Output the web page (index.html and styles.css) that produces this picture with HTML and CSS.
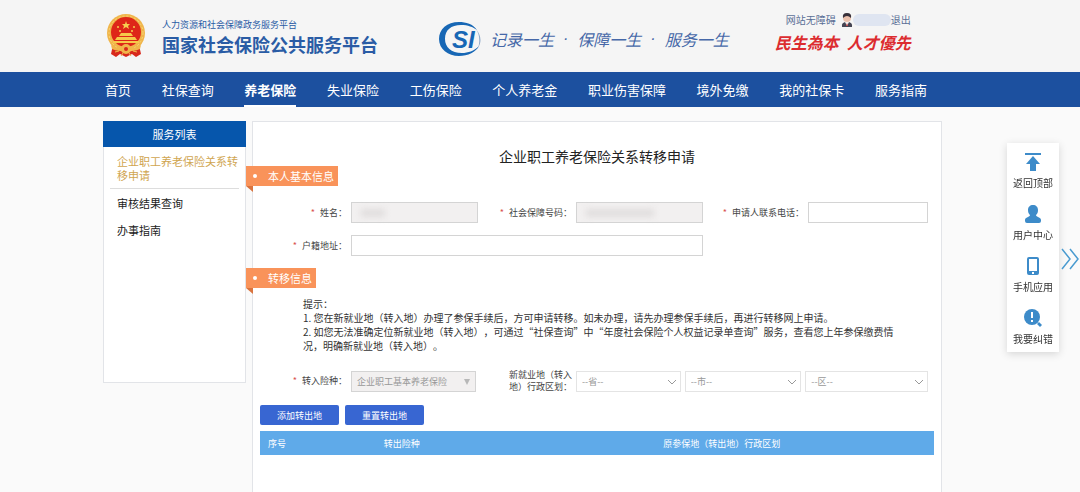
FILE: index.html
```html
<!DOCTYPE html>
<html lang="zh-CN">
<head>
  <meta charset="UTF-8">
  <meta name="viewport" content="width=device-width, initial-scale=1.0">
  <title>国家社会保险公共服务平台</title>
  <link rel="stylesheet" href="styles.css">
</head>
<body>

  <header class="header">
    <svg class="emblem" viewBox="0 0 40 44" aria-hidden="true">
      <path d="M7 31 L5 40 L10 43 L14 40 L20 43 L26 40 L30 43 L35 40 L33 31 Z" fill="#d8281c" />
      <circle cx="20" cy="19" r="19" fill="#f0b54a" />
      <circle cx="20" cy="19" r="17" fill="none" stroke="#f8d477" stroke-width="1" stroke-dasharray="2 2" />
      <circle cx="20" cy="18" r="15" fill="#de2618" />
      <path d="M20 7 l1 3 h3 l-2 2 1 3 -3 -2 -3 2 1 -3 -2 -2 h3 Z" fill="#f6cf4f" />
      <circle cx="12" cy="13" r="1" fill="#f6cf4f" />
      <circle cx="28" cy="13" r="1" fill="#f6cf4f" />
      <circle cx="14" cy="17" r="1" fill="#f6cf4f" />
      <circle cx="26" cy="17" r="1" fill="#f6cf4f" />
      <path d="M13 22 L15 19 H25 L27 22 Z M9 26 L11 23 H29 L31 26 Z M7 27 H33 V29 H7 Z" fill="#f6c94a" />
      <path d="M5 31 Q12 36 17 33 H23 Q28 36 35 31 L34 35 Q28 38 24 36 H16 Q12 38 6 35 Z" fill="#f0b54a" />
      <circle cx="20" cy="35" r="5" fill="#f0b54a" />
      <circle cx="20" cy="35" r="2" fill="#d8281c" />
      <path d="M9 38 L13 37 M31 38 L27 37 M15 42 L17 39 M25 42 L23 39" stroke="#f0b54a" stroke-width="1" />
    </svg>
    <div class="site-name">
      <p class="site-sub">人力资源和社会保障政务服务平台</p>
      <h1 class="site-title">国家社会保险公共服务平台</h1>
    </div>

    <div class="slogan">
      <svg class="si-logo" viewBox="0 0 42 34" role="img" aria-label="SI">
        <path d="M38 8 C34 2 27 0 20 0 C8 0 0 7 0 17 C0 27 9 34 20 34 C29 34 37 30 40 24 C35 29 29 31 23 31 C12 31 6 25 6 17 C6 8 12 3 22 3 C29 3 34 5 38 8 Z" fill="#1767b5" />
        <path d="M37 7 C42 13 43 20 39 26 C41 20 41 13 37 7 Z" fill="#8aa6c6" />
        <text x="13" y="26" class="si-text">SI</text>
      </svg>
      <span>记录一生</span><span>·</span><span>保障一生</span><span>·</span><span>服务一生</span>
    </div>

    <div class="account">
      <div class="account-links">
        <a href="#">网站无障碍</a>
        <svg class="avatar" viewBox="0 0 12 14" aria-hidden="true">
          <path d="M1 14 Q0 9 6 9 Q12 9 11 14 Z" fill="#454553" />
          <path d="M4 9 L6 13 L8 9 Z" fill="#f3f3f3" />
          <circle cx="6" cy="5" r="4" fill="#ecc1ad" />
          <path d="M2 5 Q1 0 6 0 Q11 0 10 5 Q8 3 6 3 Q4 3 2 5 Z" fill="#38313a" />
          <path d="M6 10 L7 13 H5 Z" fill="#c54949" />
        </svg>
        <span class="user-mask"></span>
        <a href="#">退出</a>
      </div>
      <p class="motto"><span>民生為本</span><span>人才優先</span></p>
    </div>
  </header>

  <nav class="nav">
    <a href="#">首页</a>
    <a href="#">社保查询</a>
    <a href="#" class="active">养老保险</a>
    <a href="#">失业保险</a>
    <a href="#">工伤保险</a>
    <a href="#">个人养老金</a>
    <a href="#">职业伤害保障</a>
    <a href="#">境外免缴</a>
    <a href="#">我的社保卡</a>
    <a href="#">服务指南</a>
  </nav>

  <div class="page">
    <aside class="sidebar">
      <h2 class="sidebar-title">服务列表</h2>
      <ul class="menu">
        <li class="current"><a href="#">企业职工养老保险关系转移申请</a></li>
        <li><a href="#">审核结果查询</a></li>
        <li><a href="#">办事指南</a></li>
      </ul>
    </aside>

    <main class="content">
      <h2 class="content-title">企业职工养老保险关系转移申请</h2>

      <!-- Personal info -->
      <h3 class="tag">本人基本信息</h3>
      <div class="form">
        <label for="name"><i>*</i>姓名：</label>
        <div class="masked"><input type="text" id="name" disabled><span class="smudge"></span></div>
        <label for="idNumber"><i>*</i>社会保障号码：</label>
        <div class="masked"><input type="text" id="idNumber" disabled><span class="smudge smudge-long"></span></div>
        <label for="phone"><i>*</i>申请人联系电话：</label>
        <input type="text" id="phone">
        <label for="address"><i>*</i>户籍地址：</label>
        <input type="text" id="address" class="wide">
      </div>

      <!-- Transfer info -->
      <h3 class="tag tag-transfer">转移信息</h3>
      <div class="hint">
        <p>提示：</p>
        <p>1. 您在新就业地（转入地）办理了参保手续后，方可申请转移。如未办理，请先办理参保手续后，再进行转移网上申请。</p>
        <p>2. 如您无法准确定位新就业地（转入地），可通过“社保查询”中“年度社会保险个人权益记录单查询”服务，查看您上年参保缴费情况，明确新就业地（转入地）。</p>
      </div>

      <div class="form form-transfer">
        <label for="insurance"><i>*</i>转入险种：</label>
        <div class="select-box insurance">
          <select id="insurance" disabled><option>企业职工基本养老保险</option></select>
          <svg viewBox="0 0 8 8" aria-hidden="true"><path d="M1 1 H7 L4 7 Z" fill="#b8b8b8" /></svg>
        </div>
        <label for="province" class="two-line">新就业地（转入地）行政区划：</label>
        <div class="region">
          <div class="select-box">
            <select id="province"><option>--省--</option></select>
            <svg viewBox="0 0 8 8" aria-hidden="true"><path d="M0 2 L4 6 L8 2" fill="none" stroke="#999" /></svg>
          </div>
          <div class="select-box">
            <select id="city" aria-label="市"><option>--市--</option></select>
            <svg viewBox="0 0 8 8" aria-hidden="true"><path d="M0 2 L4 6 L8 2" fill="none" stroke="#999" /></svg>
          </div>
          <div class="select-box">
            <select id="district" aria-label="区"><option>--区--</option></select>
            <svg viewBox="0 0 8 8" aria-hidden="true"><path d="M0 2 L4 6 L8 2" fill="none" stroke="#999" /></svg>
          </div>
        </div>
      </div>

      <div class="actions">
        <button type="button">添加转出地</button>
        <button type="button">重置转出地</button>
      </div>

      <table class="table">
        <thead>
          <tr>
            <th class="col-no">序号</th>
            <th class="col-type">转出险种</th>
            <th>原参保地（转出地）行政区划</th>
          </tr>
        </thead>
      </table>
    </main>
  </div>

  <!-- Floating toolbar -->
  <div class="toolbar">
    <a href="#">
      <svg viewBox="0 0 20 20" aria-hidden="true"><path d="M2 1 H18 V3 H2 Z M10 4 L17 12 H13 V19 H7 V12 H3 Z" /></svg>
      返回顶部
    </a>
    <a href="#">
      <svg viewBox="0 0 20 20" aria-hidden="true"><path d="M10 1 C13 1 15 3 15 6 C15 9 14 10 13 11 C13 13 18 13 18 16 V17 Q18 19 16 19 H4 Q2 19 2 17 V16 C2 13 7 13 7 11 C6 10 5 9 5 6 C5 3 7 1 10 1 Z" /></svg>
      用户中心
    </a>
    <a href="#">
      <svg viewBox="0 0 20 20" aria-hidden="true"><path fill-rule="evenodd" d="M6 1 H14 Q16 1 16 3 V17 Q16 19 14 19 H6 Q4 19 4 17 V3 Q4 1 6 1 Z M6 3 V15 H14 V3 Z M9 16 V18 H11 V16 Z" /></svg>
      手机应用
    </a>
    <a href="#">
      <svg viewBox="0 0 20 20" aria-hidden="true">
        <circle cx="9" cy="9" r="8" />
        <path d="M14 16 L16 14 L19 17 L17 19 Z" />
        <path d="M8 4 H10 L10 10 H8 Z M8 12 H10 V14 H8 Z" fill="#fff" />
      </svg>
      我要纠错
    </a>
  </div>
  <button type="button" class="toolbar-toggle" aria-label="收起">
    <svg viewBox="0 0 18 24" aria-hidden="true"><path d="M1 2 L9 12 L1 22 M9 2 L17 12 L9 22" fill="none" stroke="#4a9bd0" stroke-width="1.5" /></svg>
  </button>

</body>
</html>
```
FILE: styles.css
```css
* {
  box-sizing: border-box;
}

body {
  font-family: "Noto Sans CJK SC", sans-serif;
  font-size: 9px;
  background-color: #fafafa;
  color: #333;
  display: flex;
  flex-direction: column;
  min-height: 100vh;
  margin: 0;
}

h1, h2, h3, p, ul {
  margin: 0;
  padding: 0;
  font-weight: normal;
}

a {
  color: inherit;
  text-decoration: none;
}

/* Header */
.header {
  display: flex;
  align-items: center;
  height: 72px;
  padding: 0 106px;
  background-color: #f5f5f5;
}

.emblem {
  width: 40px;
  height: 44px;
  margin-right: 16px;
}

.site-name {
  color: #2a5ca5;
}

.site-sub {
  font-size: 9px;
  line-height: 16px;
}

.site-title {
  font-size: 18px;
  font-weight: bold;
  line-height: 22px;
}

.slogan {
  display: flex;
  align-items: center;
  gap: 9px;
  margin-left: 61px;
  padding-top: 6px;
  color: #4668a8;
  font-family: "Liberation Sans", "Noto Sans CJK SC", sans-serif;
  font-size: 16px;
  font-style: italic;
}

.si-logo {
  width: 42px;
  height: 34px;
}

.si-text {
  font: italic bold 24px "Liberation Sans", sans-serif;
  fill: #1767b5;
}

.account {
  margin-left: 46px;
  padding-bottom: 8px;
}

.account-links {
  display: flex;
  align-items: center;
  justify-content: flex-end;
  color: #5a6f96;
  font-size: 10px;
  line-height: 20px;
}

.avatar {
  width: 12px;
  height: 14px;
  margin-left: 5px;
}

.user-mask {
  width: 38px;
  height: 12px;
  border-radius: 6px;
  background-color: #dfe5f1;
}

.motto {
  display: flex;
  gap: 8px;
  color: #dc2c30;
  font-size: 16px;
  font-style: italic;
  font-weight: bold;
  line-height: 24px;
}

/* Main navigation */
.nav {
  display: flex;
  justify-content: space-between;
  height: 35px;
  padding: 0 153px 0 105px;
  background-color: #1c509f;
  color: #fff;
  font-size: 13px;
  line-height: 35px;
}

.nav .active {
  border-bottom: 2px solid #fff;
  font-weight: bold;
}

/* Page body */
.page {
  display: flex;
  flex: 1;
  align-items: flex-start;
  gap: 6px;
  padding: 14px 138px 0 103px;
}

.sidebar {
  flex: none;
  width: 143px;
  min-height: 262px;
  border: 1px solid #e2e4e8;
  background-color: #fff;
}

.sidebar-title {
  margin: -1px -1px 0;
  background-color: #0656ac;
  color: #fff;
  font-size: 11px;
  line-height: 26px;
  text-align: center;
}

.menu {
  padding: 0 6px;
  list-style: none;
  color: #222;
  font-size: 11px;
  line-height: 14px;
}

.menu li {
  padding: 7px 0 6px 7px;
}

.menu .current {
  border-bottom: 1px solid #ddd;
  color: #d0a550;
}

.content {
  flex: 1;
  align-self: stretch;
  padding: 25px 7px 0;
  border: 1px solid #e2e4e8;
  border-bottom: none;
  background-color: #fff;
}

.content-title {
  color: #222;
  font-size: 14px;
  line-height: 19px;
  text-align: center;
}

/* Ribbon style section heading */
.tag {
  position: relative;
  width: fit-content;
  margin-left: -14px;
  padding: 0 4px 0 22px;
  background-color: #f9935a;
  color: #fff;
  font-size: 11px;
  line-height: 20px;
}

.tag::before {
  content: "";
  position: absolute;
  top: 8px;
  left: 7px;
  width: 4px;
  height: 4px;
  border-radius: 50%;
  background-color: #fff;
}

.tag::after {
  content: "";
  position: absolute;
  top: 20px;
  left: 0;
  border-top: 6px solid #d9743f;
  border-left: 7px solid transparent;
}

.tag-transfer {
  margin-top: 12px;
}

/* Form */
.form {
  display: grid;
  grid-template-columns: 91px 127fr 98px 127fr 105px 120fr;
  row-gap: 12px;
  align-items: center;
  margin-top: 16px;
  padding-right: 6px;
}

.form label {
  padding-right: 4px;
  color: #444;
  line-height: 12px;
  text-align: right;
}

.form label i {
  margin-right: 5px;
  color: #d9534f;
  font-style: normal;
}

.form input,
.form select {
  display: block;
  width: 100%;
  height: 21px;
  padding: 0 5px;
  border: 1px solid #d4d4d4;
  border-radius: 0;
  background-color: #fff;
  color: #999;
  font-family: inherit;
  font-size: 9px;
  appearance: none;
}

.form input:disabled,
.form select:disabled {
  background-color: #f2f0f0;
  color: #999;
  opacity: 1;
}

.form .wide {
  grid-column: 2 / 5;
}

.masked {
  position: relative;
}

.smudge {
  position: absolute;
  top: 7px;
  left: 10px;
  width: 24px;
  height: 8px;
  background-color: #e0dddd;
  filter: blur(3px);
}

.smudge-long {
  width: 68px;
}

.hint {
  margin-top: 9px;
  padding: 0 24px 0 43px;
  font-size: 10px;
  line-height: 14px;
  text-spacing-trim: space-all;
}

.form .two-line {
  padding-left: 25px;
  text-spacing-trim: space-all;
}

.insurance {
  margin-right: 2px;
}

.region {
  display: grid;
  grid-column: 4 / 7;
  grid-template-columns: 105fr 117fr 123fr;
  gap: 4px;
}

.form .region select {
  border-color: #e4e4e4;
}

.select-box {
  position: relative;
}

.select-box svg {
  position: absolute;
  top: 7px;
  right: 5px;
  width: 8px;
  height: 8px;
  pointer-events: none;
}

.actions {
  display: flex;
  gap: 6px;
  margin-top: 12px;
}

.actions button {
  width: 79px;
  height: 20px;
  padding: 0;
  border: none;
  border-radius: 2px;
  background-color: #3866d2;
  color: #fff;
  font-family: inherit;
  font-size: 9px;
  cursor: pointer;
}

.table {
  width: 100%;
  margin-top: 6px;
  border-collapse: collapse;
  table-layout: fixed;
}

.table th {
  height: 24px;
  padding: 0;
  background-color: #5faae9;
  color: #fff;
  font-weight: normal;
}

.table .col-no {
  width: 34px;
}

.table .col-type {
  width: 32%;
}

/* Floating toolbar */
.toolbar {
  position: fixed;
  top: 143px;
  right: 21px;
  display: flex;
  flex-direction: column;
  gap: 13px;
  width: 52px;
  padding: 9px 0 5px;
  background-color: #fff;
  box-shadow: 0 2px 8px rgba(0, 0, 0, 0.15);
  font-size: 10px;
  line-height: 16px;
}

.toolbar a {
  display: flex;
  flex-direction: column;
  align-items: center;
  gap: 3px;
}

.toolbar svg {
  width: 20px;
  height: 20px;
  fill: #3d8bc9;
}

.toolbar-toggle {
  position: fixed;
  top: 247px;
  right: 1px;
  width: 18px;
  height: 24px;
  padding: 0;
  border: none;
  background: none;
  cursor: pointer;
}
```
